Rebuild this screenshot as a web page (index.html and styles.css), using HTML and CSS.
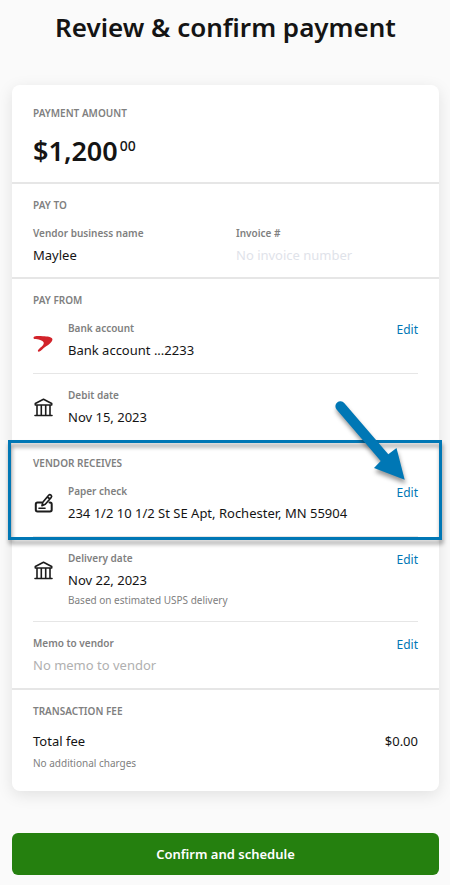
FILE: index.html
```html
<!DOCTYPE html>
<html lang="en">
<head>
    <meta charset="UTF-8">
    <meta name="viewport" content="width=device-width, initial-scale=1.0">
    <title>Review &amp; confirm payment</title>
    <link rel="stylesheet" href="styles.css">
</head>
<body>
    <h1>Review &amp; confirm payment</h1>

    <div class="card">
        <section class="amount-section">
            <h2>Payment amount</h2>
            <div class="amount">$1,200<sup>00</sup></div>
        </section>

        <section>
            <h2>Pay to</h2>
            <div class="columns">
                <div>
                    <div class="label">Vendor business name</div>
                    <div class="value">Maylee</div>
                </div>
                <div>
                    <div class="label">Invoice #</div>
                    <div class="value empty-light">No invoice number</div>
                </div>
            </div>
        </section>

        <section>
            <h2>Pay from</h2>
            <div class="row">
                <svg class="icon" viewBox="0 0 22 22">
                    <path fill="#d2232a" d="M0.800 6.900C2 5.700 6 6 10 6.200C14 6.400 18.900 6.700 19.400 9C19.800 11.800 16 14.400 12.800 16.600C9.800 18.600 8 21.300 5.900 21.700C5 21.800 4.600 21 5 20.300C6.900 17.500 11.400 15.300 10.700 12.500C9.900 9.900 5 9.200 1.600 8.900C0.600 8.700 0.200 7.700 0.800 6.900Z"/>
                </svg>
                <div class="details">
                    <div class="label">Bank account</div>
                    <div class="value">Bank account ...2233</div>
                </div>
                <a href="#" class="edit">Edit</a>
            </div>
            <div class="row">
                <svg class="icon" viewBox="0 0 22 22" fill="none" stroke="#1c1c1c" stroke-width="1.6" stroke-linejoin="round" stroke-linecap="round">
                    <path d="M2.300 6.500L10.500 2.300L18.700 6.500V8H2.300ZM4 8.500V18M8.300 8.500V18M12.700 8.500V18M17 8.500V18M2 18.500H19"/>
                </svg>
                <div class="details">
                    <div class="label">Debit date</div>
                    <div class="value">Nov 15, 2023</div>
                </div>
            </div>
        </section>

        <section>
            <div class="highlight">
                <h2>Vendor receives</h2>
                <div class="row">
                    <svg class="icon" viewBox="0 0 22 22" fill="none" stroke="#1c1c1c" stroke-width="2" stroke-linejoin="round" stroke-linecap="round">
                        <path d="M8.500 9.500H4.500Q2.800 9.500 2.800 11.200V16.800Q2.800 18.500 4.500 18.500H17Q18.700 18.500 18.700 16.800V11.200Q18.700 9.500 17 9.500H16.500"/>
                        <path stroke-width="1.6" d="M6 15.300H12"/>
                        <path stroke-width="1.7" d="M9 12.600L9.800 9.300L15.700 2.300Q16.700 1.200 18 2.200Q19.200 3.300 18.200 4.500L12.300 11.300ZM14.600 4L16.800 6"/>
                    </svg>
                    <div class="details">
                        <div class="label">Paper check</div>
                        <div class="value">234 1/2 10 1/2 St SE Apt, Rochester, MN 55904</div>
                    </div>
                    <a href="#" class="edit">Edit</a>
                </div>
                <svg class="arrow" viewBox="0 0 80 90">
                    <path fill="#0077b5" d="M8.600 12.500A5 5 0 0 1 16.200 6L60.300 57.300L68.500 51L76.700 82.700L46 71L52.700 64Z"/>
                </svg>
            </div>
            <div class="row">
                <svg class="icon" viewBox="0 0 22 22" fill="none" stroke="#1c1c1c" stroke-width="1.6" stroke-linejoin="round" stroke-linecap="round">
                    <path d="M2.300 6.500L10.500 2.300L18.700 6.500V8H2.300ZM4 8.500V18M8.300 8.500V18M12.700 8.500V18M17 8.500V18M2 18.500H19"/>
                </svg>
                <div class="details">
                    <div class="label">Delivery date</div>
                    <div class="value">Nov 22, 2023</div>
                    <div class="note">Based on estimated USPS delivery</div>
                </div>
                <a href="#" class="edit">Edit</a>
            </div>
            <div class="row">
                <div class="details">
                    <div class="label">Memo to vendor</div>
                    <div class="value empty">No memo to vendor</div>
                </div>
                <a href="#" class="edit">Edit</a>
            </div>
        </section>

        <section class="fee-section">
            <h2>Transaction fee</h2>
            <div class="total">
                <span>Total fee</span>
                <span>$0.00</span>
            </div>
            <div class="note">No additional charges</div>
        </section>
    </div>

    <button type="button" class="confirm">Confirm and schedule</button>
</body>
</html>
```
FILE: styles.css
```css
:root {
    --text-color: #141414;
    --muted-color: #808080;
    --line-color: #e6e6e6;
    --link-color: #0077b5;
    --button-color: #25800f;
}

* {
    margin: 0;
    padding: 0;
    box-sizing: border-box;
}

body {
    background-color: #fafafa;
    color: var(--text-color);
    font-family: 'Noto Sans', sans-serif;
    font-size: 13px;
    line-height: 22px;
    padding: 9px 11px 11px 12px;
}

h1 {
    font-size: 26px;
    font-weight: 600;
    line-height: 36px;
    text-align: center;
    margin-bottom: 40px;
}

h2 {
    color: var(--muted-color);
    font-size: 10px;
    font-weight: 600;
    line-height: 18px;
    text-transform: uppercase;
    margin-bottom: 10px;
}

.card {
    background-color: #ffffff;
    border-radius: 8px;
    box-shadow: 0 4px 16px rgba(0, 0, 0, 0.1);
}

section {
    padding: 12px 21px 0;
    border-bottom: 2px solid var(--line-color);
}

.amount-section {
    padding-top: 19px;
    padding-bottom: 12px;
}

.amount {
    font-size: 27px;
    font-weight: 600;
    line-height: 38px;
}

.amount sup {
    font-size: 14px;
    font-weight: 500;
    line-height: 14px;
    vertical-align: 10px;
    margin-left: 2px;
}

.columns {
    display: grid;
    grid-template-columns: 1fr 1fr;
    gap: 21px;
    padding-bottom: 11px;
}

.label {
    color: var(--muted-color);
    font-size: 10px;
    font-weight: 600;
    line-height: 18px;
    margin-bottom: 2px;
}

.empty {
    color: #b0b0b0;
}

.empty-light {
    color: #dfe3ea;
}

.note {
    color: var(--muted-color);
    font-size: 10px;
    line-height: 18px;
}

.row {
    display: flex;
    align-items: flex-start;
    padding-bottom: 12px;
}

.row + .row,
.highlight + .row {
    border-top: 1px solid var(--line-color);
    padding-top: 12px;
}

.icon {
    flex: none;
    width: 22px;
    height: 22px;
    margin: 11px 13px 0 0;
}

.details {
    flex: 1;
    white-space: nowrap;
}

.edit {
    color: var(--link-color);
    font-size: 12px;
    line-height: 22px;
    text-decoration: none;
}

.highlight {
    position: relative;
}

/* callout frame around the first vendor row */
.highlight::after {
    content: "";
    position: absolute;
    inset: -14px -24px -4px -25px;
    border: 3px solid var(--link-color);
    filter: drop-shadow(1px 4px 2px rgba(0, 0, 0, 0.4));
    pointer-events: none;
}

.arrow {
    position: absolute;
    top: -57px;
    right: 10px;
    width: 80px;
    height: 90px;
    z-index: 1;
    filter: drop-shadow(1px 4px 2px rgba(0, 0, 0, 0.4));
    pointer-events: none;
}

.fee-section {
    border-bottom: none;
    padding-bottom: 19px;
}

.total {
    display: flex;
    justify-content: space-between;
    margin-bottom: 2px;
}

.confirm {
    display: block;
    width: 100%;
    margin-top: 42px;
    padding: 10px;
    border: none;
    border-radius: 6px;
    background-color: var(--button-color);
    color: #ffffff;
    font-family: inherit;
    font-size: 13px;
    font-weight: 600;
    line-height: 22px;
    cursor: pointer;
}
```
